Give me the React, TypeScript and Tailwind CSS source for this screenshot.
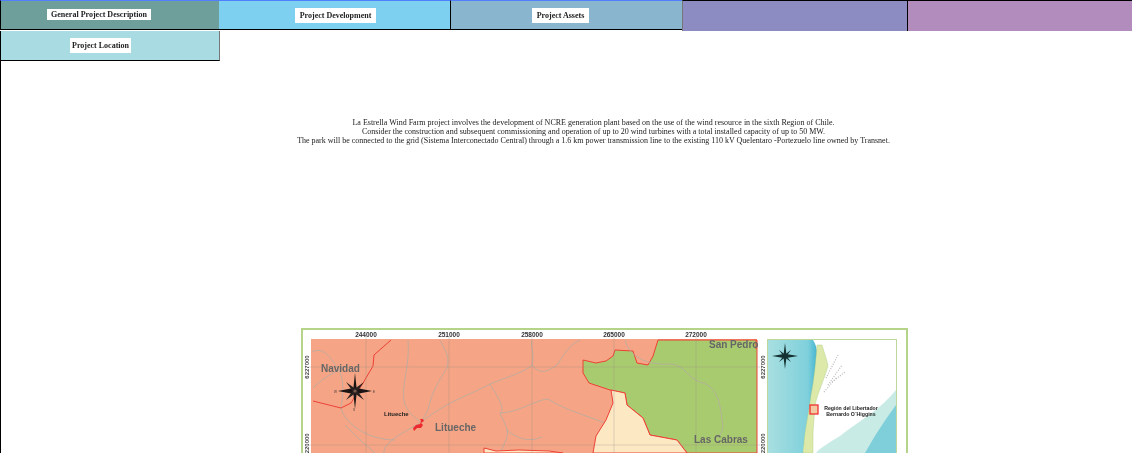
const tabs = [
  { label: "General Project Description", width: "w-[219px]", bg: "bg-[#6f9f9a]", extra: "border-l border-b border-black border-t-[#5080ff] border-t pr-[22px] pb-[2px]", labelClass: "px-[4px]" },
  { label: "Project Development", width: "w-[231px]", bg: "bg-[#7dd0f0]", extra: "border-b border-black border-t-[#5080ff] border-t pl-[2px]", labelClass: "px-[5px] py-[2px]" },
  { label: "Project Assets", width: "w-[232px]", bg: "bg-[#8ab5cf]", extra: "border-l border-b border-black border-t-[#5080ff] border-t pr-[12px]", labelClass: "px-[5px] py-[2px]" },
  { label: "", width: "w-[225px]", bg: "bg-[#8c8cc2]", extra: "border-l border-t border-l-[#777] border-t-black h-[31px]", labelClass: "" },
  { label: "", width: "w-[225px]", bg: "bg-[#b18cbd]", extra: "border-l border-t border-black h-[31px]", labelClass: "" },
];

function ProjectMap() {
  const grays = [
    "M312 352 C325 345 333 362 340 372 C345 385 342 400 341 408 C345 425 370 440 395 440",
    "M313 388 C325 375 338 372 345 366",
    "M408 340 C410 370 400 385 405 405 C410 415 418 420 420 422",
    "M440 340 C445 350 450 355 447 368 C440 380 432 390 428 410 L421 422",
    "M421 422 C450 400 470 395 490 384 C510 376 525 372 532 365 C535 355 530 345 532 340",
    "M532 365 C540 375 548 372 558 364 C565 352 570 345 580 340",
    "M490 384 C500 400 505 410 500 413 C520 412 535 400 548 399 C565 410 585 415 605 423",
    "M500 413 C505 425 510 430 506 440 L500 453",
    "M506 430 C520 440 530 442 542 437",
    "M384 453 C382 440 420 425 420 422",
    "M345 425 C355 435 365 445 375 453",
  ];
  return (
    <svg viewBox="301 328 607 125" className="block h-[125px] w-[607px] shrink-0 blur-[0.4px]" fontFamily="Liberation Sans, sans-serif">
      <rect x="302" y="329" width="605" height="130" fill="#fff" stroke="#b5d48a" strokeWidth="2" />
      <rect x="311" y="339" width="446" height="120" fill="#f5a585" />
      {grays.map((d) => (
        <path key={d} d={d} fill="none" stroke="#b5aca2" strokeWidth="0.8" />
      ))}
      <path
        d="M583 360 L596 363 L606 361 L613 356 L615 350 L633 351 L637 363 L648 365 L653 356 L658 340 L757 340 L757 453 L687 453 L677 440 L650 435 L643 418 L627 405 L625 393 L610 390 L589 383 L583 373 Z"
        fill="#a9cb6f"
        stroke="#ee4035"
      />
      <path
        d="M611 390 L625 393 L627 405 L643 418 L650 435 L677 440 L687 453 L593 453 L596 436 L606 420 L613 403 Z"
        fill="#fde8c4"
        stroke="#ee4035"
      />
      <path d="M484 453 L484 448 L496 451 L519 450 L549 451 L563 453 Z" fill="#fde8c4" stroke="#ee4035" />
      <path d="M625 340 C628 352 640 366 672 364 C685 366 688 378 700 382 C716 386 720 400 722 420 C724 428 722 432 718 438" fill="none" stroke="#b5aca2" strokeWidth="0.8" />
      <path d="M391 340 L374 355 L373 366 L363 383 L351 403 L341 408 L313 401" fill="none" stroke="#ee4035" strokeWidth="1" />
      <path d="M756 340 L756 349" stroke="#ee4035" />

      {[366, 449, 532, 614, 696].map((x) => (
        <path key={x} d={`M${x} 336 V453`} stroke="#8f8a80" strokeWidth="0.3" />
      ))}
      {[367, 445].map((y) => (
        <path key={y} d={`M308 ${y} H760`} stroke="#8f8a80" strokeWidth="0.3" />
      ))}
      {[
        ["244000", 366],
        ["251000", 449],
        ["258000", 532],
        ["265000", 614],
        ["272000", 696],
      ].map(([t, x]) => (
        <text key={t} x={x} y="337" textAnchor="middle" fontSize="6.5" fontWeight="700" fill="#333">
          {t}
        </text>
      ))}
      <text transform="translate(309 367) rotate(-90)" textAnchor="middle" fontSize="6" fontWeight="700" fill="#444">6227000</text>
      <text transform="translate(309 445) rotate(-90)" textAnchor="middle" fontSize="6" fontWeight="700" fill="#444">6220000</text>
      <text transform="translate(765 367) rotate(-90)" textAnchor="middle" fontSize="6" fontWeight="700" fill="#444">6227000</text>
      <text transform="translate(765 445) rotate(-90)" textAnchor="middle" fontSize="6" fontWeight="700" fill="#444">6220000</text>

      <text x="321" y="372" fontSize="10" fontWeight="700" fill="#666">Navidad</text>
      <text x="384" y="416" fontSize="6" fontWeight="700" fill="#222">Litueche</text>
      <text x="435" y="431" fontSize="10" fontWeight="700" fill="#666">Litueche</text>
      <text x="709" y="348" fontSize="10" fontWeight="700" fill="#666">San Pedro</text>
      <text x="694" y="443" fontSize="10" fontWeight="700" fill="#666">Las Cabras</text>

      {/* town blob */}
      <path d="M413 428 L416 425 L420 424 L421 421 L420 419 L423 419 L424 421 L421 423 L423 425 L421 428 L417 428 L414 431 Z" fill="#ee2a30" />

      {/* compass */}
      <g transform="translate(355 391)">
        <path d="M0 -18 L1.6 -3 L17 0 L1.6 3 L0 18 L-1.6 3 L-17 0 L-1.6 -3 Z" fill="#1a1414" />
        <path d="M-9 -9 L0 -2.5 L9 -9 L2.5 0 L9 9 L0 2.5 L-9 9 L-2.5 0 Z" fill="#2a2020" />
        <circle r="1.6" fill="#7d5b50" />
      </g>
      <text x="334" y="393" fontSize="3" fill="#333">W</text>
      <text x="373" y="393" fontSize="3" fill="#333">E</text>
      <text x="353" y="411" fontSize="3" fill="#333">S</text>

      {/* inset map */}
      <defs>
        <linearGradient id="sea" x1="0" x2="1" y1="0" y2="0">
          <stop offset="0" stopColor="#a8dfe0" />
          <stop offset="0.8" stopColor="#7fd0dc" />
          <stop offset="1" stopColor="#3fb3cf" />
        </linearGradient>
      </defs>
      <rect x="767.5" y="339.5" width="129" height="120" fill="#fff" stroke="#bcd99a" />
      <path d="M768 340 H813 C820 350 818 370 815 385 C812 405 806 425 803 453 H768 Z" fill="url(#sea)" />
      <path d="M896 390 C880 410 860 420 840 436 C830 442 820 448 816 453 H896 Z" fill="#c9ebe6" />
      <path d="M896 405 C885 420 875 435 865 453 H896 Z" fill="#7fcfda" />
      <path d="M817 345 L822 345 C824 352 827 360 828 366 C824 380 818 392 815 405 L813 433 L813 453 H803 C804 445 804 440 805 433 C807 420 809 410 811 395 C814 380 816 360 817 345 Z" fill="#dce9a8" stroke="#a9c987" strokeWidth="0.4" />
      <path d="M826 378 L838 355 M828 385 L842 365 M832 382 L845 372 M824 392 L836 378" stroke="#b9b9b9" strokeWidth="1.2" strokeDasharray="1 1.5" />
      <rect x="810" y="405" width="8" height="9" fill="#f2c9a0" stroke="#ee3030" strokeWidth="1.3" />
      <g transform="translate(785 356)">
        <path d="M0 -13 L1.4 -2 L13 0 L1.4 2 L0 13 L-1.4 2 L-13 0 L-1.4 -2 Z" fill="#143030" />
        <path d="M-6 -6 L0 -1.5 L6 -6 L1.5 0 L6 6 L0 1.5 L-6 6 L-1.5 0 Z" fill="#143030" />
      </g>
      <text x="851" y="410" textAnchor="middle" fontSize="5.2" fontWeight="700" fill="#222">Región del Libertador</text>
      <text x="851" y="416" textAnchor="middle" fontSize="5.2" fontWeight="700" fill="#222">Bernardo O´Higgins</text>
    </svg>
  );
}

export default function App() {
  return (
    <div className="relative h-[453px] w-[1132px] overflow-hidden bg-white font-['Liberation_Serif',serif] text-black">
      <div className="flex items-start">
        {tabs.map((tab, i) => (
          <div
            key={i}
            className={`flex h-[30px] shrink-0 items-center justify-center ${tab.width} ${tab.bg} ${tab.extra}`}
          >
            {tab.label && (
              <span className={`bg-white text-[8px] leading-[11px] font-bold text-[#222] blur-[0.3px] ${tab.labelClass}`}>{tab.label}</span>
            )}
          </div>
        ))}
      </div>
      <div className="border-l border-black">
        <div className="flex h-[30px] w-[219px] items-center justify-center border-r border-b border-r-[#777] border-b-black bg-[#a9dbe3] pr-[19px]">
          <span className="bg-white px-[2px] py-[2px] text-[8px] leading-[11px] font-bold text-[#222] blur-[0.3px]">Project Location</span>
        </div>
        <div className="pl-[54px] pt-[57px] text-center text-[8px] leading-[9px] text-[#222] blur-[0.3px]">
          <p>La Estrella Wind Farm project involves the development of NCRE generation plant based on the use of the wind resource in the sixth Region of Chile.</p>
          <p>Consider the construction and subsequent commissioning and operation of up to 20 wind turbines with a total installed capacity of up to 50 MW.</p>
          <p>The park will be connected to the grid (Sistema Interconectado Central) through a 1.6 km power transmission line to the existing 110 kV Quelentaro -Portezuelo line owned by Transnet.</p>
        </div>
        <div className="flex justify-center pl-[76px] pt-[183px]">
          <ProjectMap />
        </div>
      </div>
    </div>
  );
}
